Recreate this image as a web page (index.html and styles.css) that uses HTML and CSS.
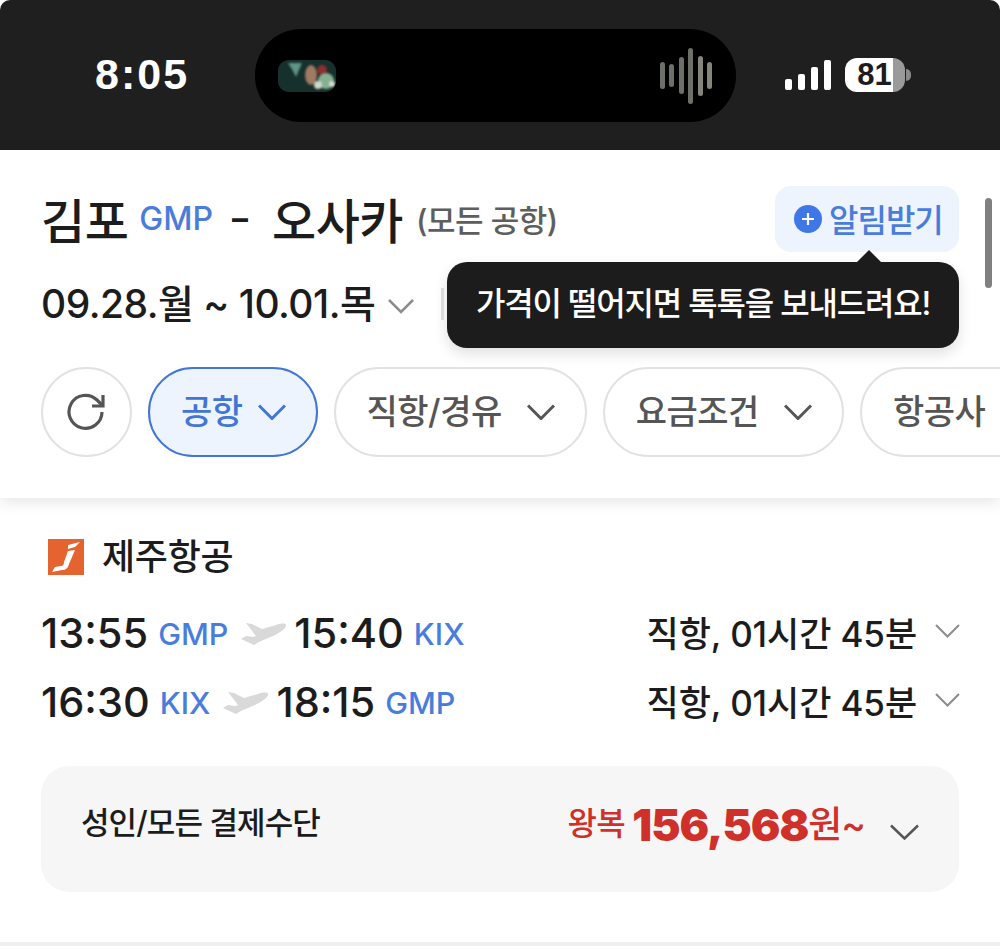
FILE: index.html
```html
<!DOCTYPE html>
<html>
	<head>
		<meta charset="utf-8">
		<title>김포 - 오사카</title>
		<link rel="stylesheet" href="styles.css">
	</head>
	<body>
		<div class="page">
			<!-- 상태바 -->
			<div class="status">
				<span class="clock">8:05</span>
				<div class="island">
					<svg class="cover" width="58" height="32" viewBox="0 0 58 32">
						<rect width="58" height="32" fill="#16302c"/>
						<g class="cover-blur">
							<path d="M10 3h14l-6 14-3-6z" fill="#5f9488"/>
							<ellipse cx="33" cy="15" rx="6" ry="10" fill="#a07a62"/>
							<circle cx="44" cy="10" r="5" fill="#8c2f2f"/>
							<circle cx="48" cy="21" r="8" fill="#86b092"/>
							<circle cx="40" cy="25" r="4" fill="#d0d8cc"/>
							<circle cx="54" cy="24" r="3" fill="#d6dcd0"/>
						</g>
					</svg>
					<div class="wave">
						<i class="w1"></i><i class="w2"></i><i class="w3"></i><i class="w4"></i><i class="w5"></i><i class="w6"></i>
					</div>
				</div>
				<div class="indicators">
					<div class="signal">
						<i class="s1"></i><i class="s2"></i><i class="s3"></i><i class="s4"></i>
					</div>
					<div class="battery"><span>81</span></div>
					<div class="nub"></div>
				</div>
			</div>

			<!-- 검색 헤더 -->
			<div class="header">
				<div class="title-row">
					<div class="title">
						<strong>김포</strong>
						<span class="code">GMP</span>
						<span class="dash">–</span>
						<strong>오사카</strong>
						<span class="all">(모든 공항)</span>
					</div>
					<div class="alert-btn">
						<svg width="28" height="28" viewBox="0 0 28 28">
							<circle cx="14" cy="14" r="14" fill="#3f78e6"/>
							<path d="M14 8v12M8 14h12" stroke="#fff" stroke-width="2.2" fill="none"/>
						</svg>
						<span>알림받기</span>
					</div>
				</div>
				<div class="date-row">
					<span class="date">09.28.월 ~ 10.01.목</span>
					<svg class="chev" width="26" height="15" viewBox="0 0 26 15"><path d="M1 1l12 12L25 1" fill="none" stroke="#8c8c8c" stroke-width="2.5"/></svg>
					<div class="divider"></div>
				</div>
				<div class="chips">
					<div class="chip round">
						<svg width="40" height="40" viewBox="0 0 40 40">
							<path d="M35 20a16.5 16.5 0 1 1-5-12l5 5" fill="none" stroke="#555" stroke-width="3.2"/>
							<path d="M36 3v11H25" fill="none" stroke="#555" stroke-width="3.2"/>
						</svg>
					</div>
					<div class="chip active">
						<span>공항</span>
						<svg width="28" height="16" viewBox="0 0 28 16"><path d="M1 1.5l13 13 13-13" fill="none" stroke="#4175d6" stroke-width="3"/></svg>
					</div>
					<div class="chip">
						<span>직항/경유</span>
						<svg width="28" height="16" viewBox="0 0 28 16"><path d="M1 1.5l13 13 13-13" fill="none" stroke="#555" stroke-width="3"/></svg>
					</div>
					<div class="chip">
						<span>요금조건</span>
						<svg width="28" height="16" viewBox="0 0 28 16"><path d="M1 1.5l13 13 13-13" fill="none" stroke="#555" stroke-width="3"/></svg>
					</div>
					<div class="chip">
						<span>항공사</span>
						<svg width="28" height="16" viewBox="0 0 28 16"><path d="M1 1.5l13 13 13-13" fill="none" stroke="#555" stroke-width="3"/></svg>
					</div>
				</div>

				<!-- 떠 있는 요소 -->
				<div class="scrollbar"></div>
				<div class="tooltip">가격이 떨어지면 톡톡을 보내드려요!</div>
			</div>

			<!-- 항공편 카드 -->
			<div class="flight">
				<div class="airline">
					<svg width="36" height="36" viewBox="0 0 36 36">
						<rect width="36" height="36" fill="#e5632f"/>
						<path d="M20 6L32 3 27 8 20 10ZM20 12l7-1-6 14c-1 4-3 6-7 6L4 33l3-5 6-1c2 0 3-2 3-4z" fill="#fff"/>
					</svg>
					<span>제주항공</span>
				</div>
				<div class="leg">
					<div class="times">
						<span class="time">13:55</span>
						<span class="port">GMP</span>
						<svg class="plane" width="46" height="23" viewBox="0 0 46 23"><path d="M5 0L11 1 21 6 35 2C41 0 46 0 45 3 44 6 38 10 34 12L18 19 13 22 0 16 5 13 12 14 15 13z" fill="#d9d9d9"/></svg>
						<span class="time">15:40</span>
						<span class="port">KIX</span>
					</div>
					<div class="info">
						<span>직항, 01시간 45분</span>
						<svg width="25" height="14" viewBox="0 0 25 14"><path d="M1 1l11.5 11.5L24 1" fill="none" stroke="#8c8c8c" stroke-width="2"/></svg>
					</div>
				</div>
				<div class="leg">
					<div class="times">
						<span class="time">16:30</span>
						<span class="port">KIX</span>
						<svg class="plane" width="46" height="23" viewBox="0 0 46 23"><path d="M5 0L11 1 21 6 35 2C41 0 46 0 45 3 44 6 38 10 34 12L18 19 13 22 0 16 5 13 12 14 15 13z" fill="#d9d9d9"/></svg>
						<span class="time">18:15</span>
						<span class="port">GMP</span>
					</div>
					<div class="info">
						<span>직항, 01시간 45분</span>
						<svg width="25" height="14" viewBox="0 0 25 14"><path d="M1 1l11.5 11.5L24 1" fill="none" stroke="#8c8c8c" stroke-width="2"/></svg>
					</div>
				</div>
				<div class="fare">
					<span class="fare-name">성인/모든 결제수단</span>
					<div class="price">
						<span class="trip">왕복</span>
						<strong>156,568</strong>
						<span class="won">원~</span>
						<svg width="29" height="16" viewBox="0 0 29 16"><path d="M1 1.5l13.5 13L28 1.5" fill="none" stroke="#555" stroke-width="2.5"/></svg>
					</div>
				</div>
			</div>
			<div class="line"></div>
		</div>
	</body>
</html>
```

FILE: styles.css
```css
*{
	margin: 0;
	padding: 0;
	box-sizing: border-box;
}

body{
	background: #fff;
	font-family: Inter, "Noto Sans CJK KR", sans-serif;
	color: #1c1c1c;
}

.page{
	width: 1000px;
	height: 950px;
	overflow: hidden;
}

/******************** 상태바 ********************/
.status{
	height: 150px;
	background: #1f1f1f;
	display: flex;
	align-items: center;
	border-radius: 10px 10px 0 0;
	padding: 0 0 0 95px;
}

.clock{
	width: 160px;
	color: #fff;
	font-family: "Liberation Sans", sans-serif;
	font-size: 43px;
	font-weight: 700;
	letter-spacing: 2px;
	margin-top: -2px;
}

.island{
	width: 481px;
	height: 93px;
	margin-top: 1px;
	background: #000;
	border-radius: 46px;
	display: flex;
	align-items: center;
	justify-content: space-between;
	padding: 0 24px 0 23px;
}

.cover{
	display: block;
	border-radius: 11px;
	overflow: hidden;
}

.cover-blur{
	filter: blur(1px);
}

.wave{
	display: flex;
	align-items: center;
	gap: 4.5px;
}

.wave i{
	display: block;
	width: 5px;
	border-radius: 3px;
	background: #6d7068;
}

.w1{ height: 27px; }
.w2{ height: 23px; }
.w3{ height: 37px; }
.w4{ height: 56px; }
.w5{ height: 40px; background: #85857a !important; }
.w6{ height: 27px; background: #85857a !important; }

.indicators{
	display: flex;
	align-items: center;
	margin-left: 49px;
}

.signal{
	display: flex;
	align-items: flex-end;
	gap: 6px;
	height: 30px;
}

.signal i{
	display: block;
	width: 7px;
	background: #fff;
	border-radius: 2px;
}

.s1{ height: 11px; }
.s2{ height: 16px; }
.s3{ height: 23px; }
.s4{ height: 30px; }

.battery{
	width: 60px;
	height: 34px;
	margin-left: 14px;
	border-radius: 12px;
	background: linear-gradient(to right, #fff 48px, #9a9a9a 48px);
	display: flex;
	align-items: center;
	justify-content: center;
	padding-right: 1px;
}

.battery span{
	font-family: "Liberation Sans", sans-serif;
	font-size: 31px;
	font-weight: 700;
	color: #1c1c1c;
}

.nub{
	width: 5px;
	height: 12px;
	margin-left: 1px;
	background: #8a8a8a;
	border-radius: 0 6px 6px 0;
}

/******************** 검색 헤더 ********************/
.header{
	position: relative;
	height: 348px;
	padding: 36px 0 0 41px;
	background: #fff;
	box-shadow: 0 4px 14px rgba(0, 0, 0, .1);
}

.title-row{
	display: flex;
	align-items: center;
	justify-content: space-between;
	height: 66px;
	padding-right: 41px;
}

.title{
	display: flex;
	align-items: center;
	margin-top: -2px;
}

.title strong{
	font-size: 48px;
	font-weight: 500;
	letter-spacing: -.5px;
}

.code{
	margin-left: 11px;
	font-size: 32px;
	font-weight: 500;
	color: #4a7ddb;
}

.dash{
	margin: 0 24px 0 19px;
	font-size: 32px;
	font-weight: 700;
}

.all{
	margin-left: 13px;
	font-size: 31px;
	font-weight: 500;
	color: #5e5e5e;
	letter-spacing: -.5px;
}

.alert-btn{
	width: 184px;
	height: 66px;
	border-radius: 16px;
	background: #edf4fe;
	display: flex;
	align-items: center;
	gap: 7px;
	padding-left: 19px;
	font-size: 32px;
	font-weight: 500;
	color: #4a7ddb;
	letter-spacing: -1px;
}

.alert-btn span{
	margin-top: -3px;
}

.date-row{
	display: flex;
	align-items: center;
	height: 52px;
	margin-top: 26px;
}

.date{
	margin-top: -6px;
	font-size: 39px;
	font-weight: 500;
	letter-spacing: -.5px;
}

.chev{
	margin-left: 13px;
	margin-top: 4px;
}

.divider{
	width: 3px;
	height: 32px;
	margin-left: 27px;
	background: #e2e2e2;
}

.chips{
	display: flex;
	gap: 16px;
	margin-top: 37px;
	overflow: hidden;
}

.chip{
	flex: none;
	height: 90px;
	border: 2px solid #e2e2e2;
	border-radius: 45px;
	display: flex;
	align-items: center;
	gap: 25px;
	padding: 0 30px 0 31px;
	font-size: 34px;
	font-weight: 500;
	letter-spacing: -.5px;
	color: #555;
}

.chip span{
	margin-top: -5px;
}

.round{
	width: 91px;
	padding: 0;
	justify-content: center;
}

.active{
	gap: 15px;
	background: #edf4fe;
	border-color: #4175d6;
	color: #4175d6;
}

.scrollbar{
	position: absolute;
	top: 48px;
	left: 985px;
	width: 7px;
	height: 90px;
	border-radius: 4px;
	background: #808080;
}

.tooltip{
	position: absolute;
	top: 112px;
	left: 447px;
	width: 512px;
	height: 86px;
	padding-bottom: 8px;
	border-radius: 20px;
	background: #1c1c1c;
	box-shadow: 0 6px 14px rgba(0, 0, 0, .12);
	color: #fff;
	font-size: 32px;
	font-weight: 500;
	letter-spacing: -1.2px;
	display: flex;
	align-items: center;
	justify-content: center;
}

/* 말풍선 꼬리 */
.tooltip::before{
	content: "";
	position: absolute;
	top: -12px;
	left: 410px;
	border: solid transparent;
	border-width: 0 12px 12px;
	border-bottom-color: #1c1c1c;
}

/******************** 항공편 카드 ********************/
.flight{
	padding: 0 41px;
}

.airline{
	display: flex;
	align-items: center;
	gap: 18px;
	height: 36px;
	margin-top: 41px;
	padding-left: 7px;
	font-size: 36px;
	font-weight: 500;
	letter-spacing: -.3px;
}

.airline span{
	margin-top: -6px;
}

.leg{
	display: flex;
	align-items: center;
	justify-content: space-between;
	height: 50px;
	margin-top: 19px;
}

.airline + .leg{
	margin-top: 33px;
}

.times{
	display: flex;
	align-items: center;
}

.time{
	font-size: 41.5px;
	font-weight: 500;
}

.port{
	margin-left: 10px;
	font-size: 30.5px;
	font-weight: 500;
	color: #4a7ddb;
}

.plane{
	margin: 2px 7px 0 13px;
}

.info{
	display: flex;
	align-items: center;
	gap: 18px;
	font-size: 35px;
	font-weight: 500;
	letter-spacing: -.1px;
}

.info span{
	margin-top: -4px;
}

.info svg{
	margin-top: -4px;
	margin-right: -1px;
}

.fare{
	display: flex;
	align-items: center;
	justify-content: space-between;
	height: 126px;
	margin-top: 39px;
	padding: 0 40px;
	border-radius: 28px;
	background: #f6f6f7;
}

.fare-name{
	font-size: 31px;
	font-weight: 500;
	letter-spacing: -.9px;
	margin-top: -18px;
}

.price{
	display: flex;
	align-items: center;
	margin-top: -8px;
	color: #d0302a;
}

.trip{
	font-size: 32px;
	font-weight: 500;
	letter-spacing: -.5px;
	margin-right: 7px;
	margin-top: -8px;
}

.price strong{
	font-size: 44px;
	font-weight: 900;
	letter-spacing: -1px;
}

.won{
	font-size: 37px;
	font-weight: 500;
	letter-spacing: -1px;
	margin-top: -6px;
}

.price svg{
	margin-left: 25px;
	margin-top: 14px;
}

.line{
	height: 4px;
	margin-top: 50px;
	background: #efefef;
}
```
